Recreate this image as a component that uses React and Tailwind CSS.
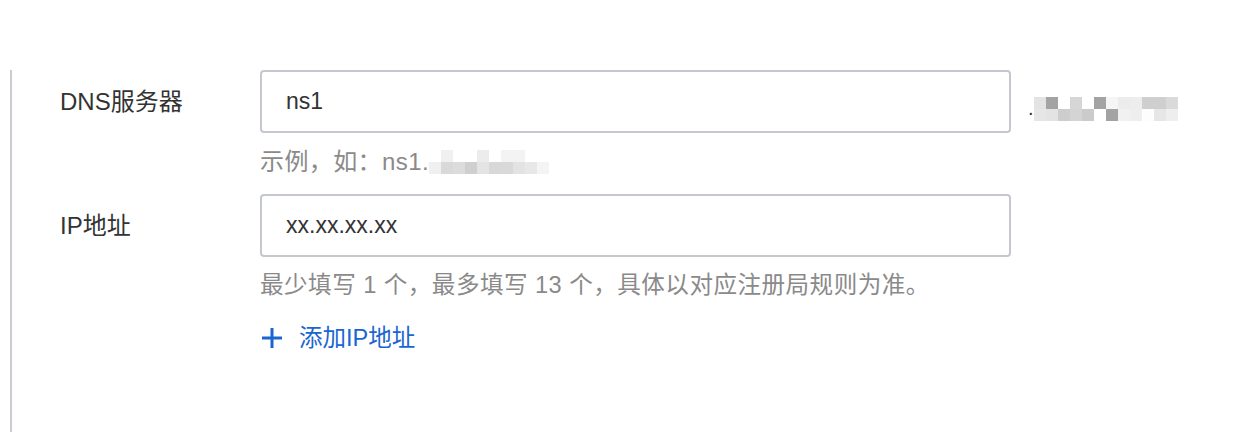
const font = { fontFamily: '"Liberation Sans", "Noto Sans CJK SC", sans-serif' };

function Mosaic({ cells, cols, size }) {
  // pixelated blur that hides the domain name
  return (
    <div className="grid" style={{ gridTemplateColumns: `repeat(${cols}, ${size}px)` }}>
      {cells.map((c, i) => (
        <div key={i} style={{ width: size, height: size, background: c }} />
      ))}
    </div>
  );
}

const suffixCells = [
  "#e3e3e3", "#a3a3a3", "#ffffff", "#d6d6d6", "#ffffff", "#a3a3a3", "#f5f5f5", "#ececec", "#ededed", "#cfcfcf", "#cfcfcf", "#dadada",
  "#e6e6e6", "#e3e3e3", "#cdcdcd", "#d4d4d4", "#cbcbcb", "#ffffff", "#a3a3a3", "#f1f1f1", "#eeeeee", "#fdfdfd", "#e6e6e6", "#eeeeee",
];

const hintCells = [
  "#ffffff", "#f0f0f0", "#ffffff", "#ffffff", "#ececec", "#ffffff", "#f3f3f3", "#f3f3f3", "#ffffff", "#ffffff", "#ffffff",
  "#f0f0f0", "#d9d9d9", "#dcdcdc", "#cfcfcf", "#e4e4e4", "#d8d8d8", "#d9d9d9", "#e3e3e3", "#e8e8e8", "#f4f4f4", "#ffffff",
];

export default function App() {
  return (
    <div className="w-[1260px] h-[432px] bg-white overflow-hidden pt-[70px] pl-[10px]" style={font}>
      <div className="border-l-2 border-[#c9ccd2] h-[362px] pl-[48px]">
        <div className="flex">
          <div className="w-[200px] h-[63px] flex items-center text-[24px] text-[#333333]">DNS服务器</div>
          <div className="flex flex-col">
            <div className="flex">
              <div className="w-[751px] h-[63px] border-2 border-[#c4c7ce] rounded-[4px] flex items-center px-[24px] text-[23px] text-[#333333]">
                ns1
              </div>
              <div className="ml-[17px] mt-[27px] self-start flex items-end">
                <span className="text-[20px] leading-none text-[#333333] mb-[3px]">.</span>
                <Mosaic cells={suffixCells} cols={12} size={12} />
              </div>
            </div>
            <div className="mt-[14px] flex items-center text-[24px] leading-[30px] tracking-[0.4px] text-[#8a8a8a]">
              <span>示例，如：ns1.</span>
              <Mosaic cells={hintCells} cols={11} size={12} />
            </div>
          </div>
        </div>

        <div className="flex mt-[17px]">
          <div className="w-[200px] h-[63px] flex items-center text-[24px] text-[#333333]">IP地址</div>
          <div className="flex flex-col">
            <div className="w-[751px] h-[63px] border-2 border-[#c4c7ce] rounded-[4px] flex items-center px-[24px] text-[23px] text-[#333333]">
              xx.xx.xx.xx
            </div>
            <div className="mt-[13px] text-[23.6px] leading-[30px] tracking-[0.45px] text-[#8a8a8a]">
              最少填写 1 个，最多填写 13 个，具体以对应注册局规则为准。
            </div>
            <div className="mt-[23px] flex items-center gap-[17px] text-[23.5px] leading-[30px] text-[#1a66d0] pl-[2px]">
              <svg width="20" height="20" viewBox="0 0 20 20">
                <path d="M10 0v20M0 10h20" stroke="#1a66d0" strokeWidth="3" />
              </svg>
              <span>添加IP地址</span>
            </div>
          </div>
        </div>
      </div>
    </div>
  );
}
